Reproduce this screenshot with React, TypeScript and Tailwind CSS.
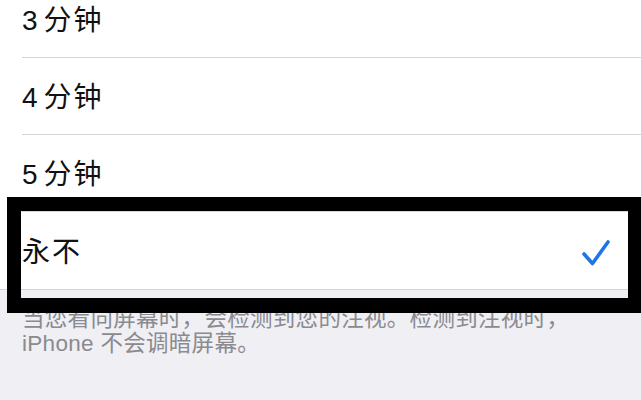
import React from "react";

const OPTIONS = ["3分钟", "4分钟", "5分钟", "永不"];
const SELECTED = "永不";

function CheckIcon() {
  return (
    <svg width="30" height="28" viewBox="0 0 30 28" fill="none">
      <polyline
        points="3,15 11.5,24.5 27,3"
        stroke="#1f75e8"
        strokeWidth="3.6"
        strokeLinecap="round"
        strokeLinejoin="round"
      />
    </svg>
  );
}

// iOS puts a little extra room between a digit and the CJK unit after it
function OptionLabel({ text }: { text: string }) {
  const m = text.match(/^(\d+)(.*)$/);
  if (!m) return <>{text}</>;
  return (
    <>
      <span className="mr-[4px]">{m[1]}</span>
      {m[2]}
    </>
  );
}

export default function App() {
  return (
    <div
      className="relative w-[641px] h-[400px] overflow-hidden bg-[#efeff4]"
      style={{ fontFamily: '"Liberation Sans", "Noto Sans CJK SC", sans-serif' }}
    >
      <div className="-mt-[19px] bg-white">
        {OPTIONS.map((label, i) => {
          const last = i === OPTIONS.length - 1;
          return (
            <div key={label} className={last ? "border-b border-[#d3d3d8]" : "pl-[22px]"}>
              <div
                className={`h-[77px] flex items-center justify-between pt-[4px] pr-[30px] ${
                  last ? "pl-[22px]" : "border-b border-[#d3d3d8]"
                }`}
              >
                <span className="text-[28px] text-[#111111] tracking-[2px]">
                  <OptionLabel text={label} />
                </span>
                {label === SELECTED && <CheckIcon />}
              </div>
            </div>
          );
        })}
      </div>

      <p className="pl-[22px] pr-[10px] pt-[16px] text-[22.5px] leading-[25px] tracking-[0.3px] text-[#8a8a8f] whitespace-nowrap">
        当您看向屏幕时，会检测到您的注视。检测到注视时，
        <br />
        iPhone 不会调暗屏幕。
      </p>

      {/* annotation frame drawn over the selected row */}
      <div className="absolute left-[7px] top-[197px] w-[634px] h-[116px] border-black border-t-[14px] border-l-[14px] border-r-[13px] border-b-[15px]" />
    </div>
  );
}
